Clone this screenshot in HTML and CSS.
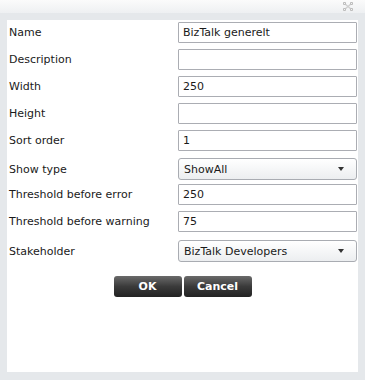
FILE: index.html
```html
<!DOCTYPE html>
<html lang="en">
<head>
    <meta charset="UTF-8">
    <title>Edit view</title>
    <link rel="stylesheet" href="styles.css">
</head>
<body>
    <div class="window">
        <div class="titlebar">
            <svg class="close" width="10" height="9" viewBox="0 0 10 9">
                <path d="M1.5 1.5 L8.5 7.5 M8.5 1.5 L1.5 7.5" stroke="#cfcfcf" stroke-width="1.4" fill="none"/>
                <path d="M0.5 0.5h2v2h-2z M7.5 0.5h2v2h-2z M0.5 6.5h2v2h-2z M7.5 6.5h2v2h-2z" stroke="#bdbdbd" stroke-width="1" fill="#f4f4f4"/>
            </svg>
        </div>
        <div class="content">
            <div class="row"><label>Name</label><input class="field" value="BizTalk generelt"></div>
            <div class="row"><label>Description</label><input class="field" value=""></div>
            <div class="row"><label>Width</label><input class="field" value="250"></div>
            <div class="row"><label>Height</label><input class="field" value=""></div>
            <div class="row"><label>Sort order</label><input class="field" value="1"></div>
            <div class="row select-row show"><label>Show type</label><div class="combo"><span>ShowAll</span><i class="arrow"></i></div></div>
            <div class="row"><label>Threshold before error</label><input class="field" value="250"></div>
            <div class="row"><label>Threshold before warning</label><input class="field" value="75"></div>
            <div class="row select-row stake"><label>Stakeholder</label><div class="combo"><span>BizTalk Developers</span><i class="arrow"></i></div></div>
            <div class="buttons">
                <button class="btn">OK</button>
                <button class="btn">Cancel</button>
            </div>
        </div>
    </div>
</body>
</html>
```

FILE: styles.css
```css
body {
    margin: 0;
    font-family: 'DejaVu Sans', Verdana, sans-serif;
    font-size: 11px;
    color: #1a1a1a;
}
.window {
    width: 365px;
    height: 380px;
    background: #e5e8eb;
    overflow: hidden;
}
.titlebar {
    height: 13px;
    background: linear-gradient(#fbfbfb, #eef0f2);
    position: relative;
    margin-bottom: 7px;
}
.close {
    position: absolute;
    right: 12px;
    top: 2px;
}
.content {
    margin: 0 7px;
    height: 352px;
    background: #fff;
    padding-top: 2px;
    box-sizing: border-box;
    display: flex;
    flex-direction: column;
}
.row {
    display: flex;
    align-items: center;
    height: 21px;
    margin-bottom: 6px;
}
.row.select-row {
    height: 22px;
}
.row.show {
    margin-top: 1px;
    margin-bottom: 4px;
}
.row.stake {
    margin-top: 2px;
}
.row label {
    width: 169px;
    padding-left: 2px;
}
.field {
    width: 179px;
    height: 21px;
    box-sizing: border-box;
    border: 1px solid #abadb3;
    border-radius: 1px;
    padding: 0 4px;
    font: inherit;
    color: #1a1a1a;
    outline: none;
}
.combo {
    width: 179px;
    height: 22px;
    box-sizing: border-box;
    border: 1px solid #a9acb2;
    border-radius: 3px;
    background: linear-gradient(#ffffff, #eceef0);
    display: flex;
    align-items: center;
    justify-content: space-between;
    padding: 0 12px 0 5px;
}
.arrow {
    width: 0;
    height: 0;
    border-left: 3px solid transparent;
    border-right: 3px solid transparent;
    border-top: 4px solid #333;
}
.buttons {
    display: flex;
    justify-content: center;
    gap: 2px;
    margin-top: 8px;
}
.btn {
    width: 68px;
    height: 21px;
    border: none;
    border-radius: 3px;
    background: linear-gradient(#6a6a6a, #3a3a3a 50%, #222 100%);
    color: #fff;
    font: inherit;
    font-weight: bold;
    padding: 0;
}
```
